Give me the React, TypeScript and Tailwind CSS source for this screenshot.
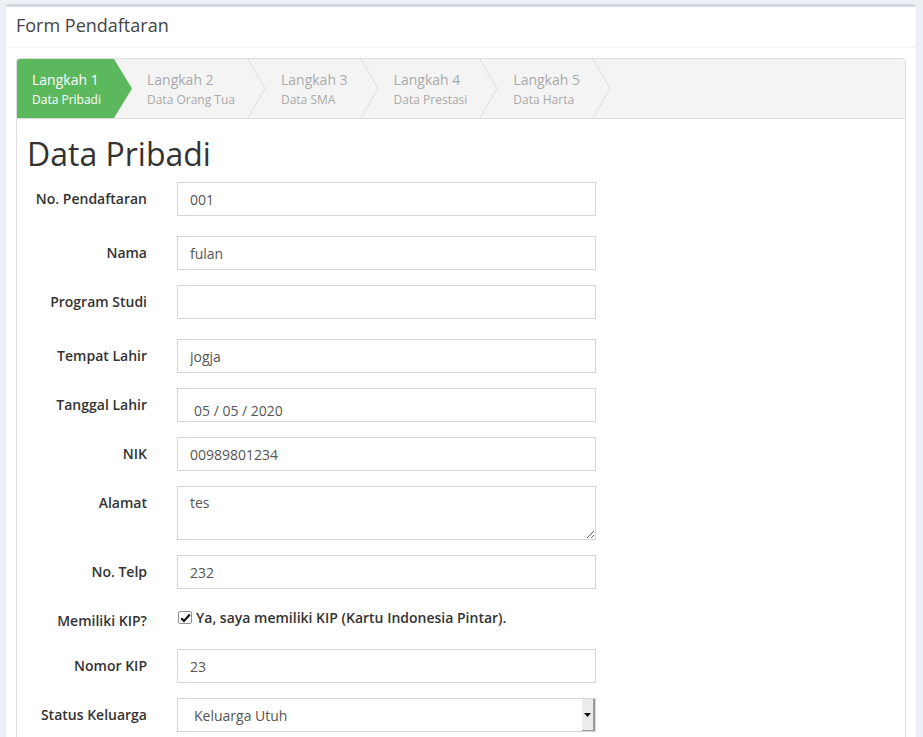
import { useState } from "react";

const steps = [
  { title: "Langkah 1", sub: "Data Pribadi" },
  { title: "Langkah 2", sub: "Data Orang Tua" },
  { title: "Langkah 3", sub: "Data SMA" },
  { title: "Langkah 4", sub: "Data Prestasi" },
  { title: "Langkah 5", sub: "Data Harta" },
];

function Row({ label, mb = "mb-[15px]", children }: { label: string; mb?: string; children: React.ReactNode }) {
  return (
    <div className={`flex items-start ${mb}`}>
      <label className="w-[130px] shrink-0 text-right pt-[7px] leading-5 text-[14px] font-semibold text-[#333]">
        {label}
      </label>
      <div className="ml-[30px] w-[419px]">{children}</div>
    </div>
  );
}

function TextInput({ value }: { value: string }) {
  return (
    <input
      type="text"
      defaultValue={value}
      className="w-full h-[34px] px-[12px] border border-[#d2d6de] bg-white text-[14px] text-[#555] outline-none"
    />
  );
}

export default function App() {
  const [kip, setKip] = useState(true);

  return (
    <div className="min-h-screen bg-[#ecf0f5] pt-[4px] font-['Open_Sans',sans-serif]">
      <div className="ml-[6px] w-[910px] bg-white border-t-[3px] border-[#d2d6de] rounded-[3px] shadow-[0_1px_1px_rgba(0,0,0,0.1)]">
        <div className="h-[41px] pt-[8px] px-[10px] border-b border-[#f4f4f4]">
          <h3 className="text-[18px] leading-5 text-[#444]">Form Pendaftaran</h3>
        </div>

        <div className="p-[10px]">
          <div className="border border-[#ddd] rounded-t-[4px] pb-[40px]">
            {/* wizard steps */}
            <div className="flex h-[60px] bg-[#f4f4f4] border-b border-[#ddd] rounded-t-[4px]">
              {steps.map((s, i) => {
                const active = i === 0;
                return (
                  <div key={s.title} className="flex h-full">
                    <div
                      className={`flex flex-col justify-center pt-[2px] pl-[15px] pr-[13px] ${
                        active ? "bg-[#5cb85c] text-white rounded-tl-[3px]" : "text-[#aaa]"
                      }`}
                    >
                      <span className="text-[14px] leading-5">{s.title}</span>
                      <span className="text-[12px] leading-5">{s.sub}</span>
                    </div>
                    <svg width="18" height="59" viewBox="0 0 18 59" className="shrink-0">
                      {active ? (
                        <polygon points="0,0 18,29.5 0,59" fill="#5cb85c" />
                      ) : (
                        <polyline points="0,0 17,29.5 0,59" fill="none" stroke="#dcdcdc" strokeWidth="1" />
                      )}
                    </svg>
                  </div>
                );
              })}
            </div>

            <h2 className="mt-[17px] mb-[11px] pl-[10px] text-[32px] leading-[35px] text-[#333]">Data Pribadi</h2>

            <Row label="No. Pendaftaran" mb="mb-[20px]">
              <TextInput value="001" />
            </Row>
            <Row label="Nama">
              <TextInput value="fulan" />
            </Row>
            <Row label="Program Studi" mb="mb-[20px]">
              <TextInput value="" />
            </Row>
            <Row label="Tempat Lahir">
              <TextInput value="jogja" />
            </Row>
            <Row label="Tanggal Lahir">
              <div className="h-[34px] pl-[16px] pt-[12px] border border-[#d2d6de] text-[14px] leading-5 text-[#555]">
                05 / 05 / 2020
              </div>
            </Row>
            <Row label="NIK">
              <TextInput value="00989801234" />
            </Row>
            <Row label="Alamat">
              <textarea
                defaultValue="tes"
                className="block w-full h-[54px] px-[12px] py-[6px] border border-[#d2d6de] text-[14px] leading-5 text-[#555] outline-none"
              />
            </Row>
            <Row label="No. Telp">
              <TextInput value="232" />
            </Row>
            <Row label="Memiliki KIP?">
              <div className="h-[30px] pt-[4px] flex items-start">
                <button
                  type="button"
                  onClick={() => setKip(!kip)}
                  className="mt-[3px] ml-[1px] w-[14px] h-[13px] rounded-[2px] border border-[#8f8f8f] bg-white flex items-center justify-center"
                >
                  {kip && (
                    <svg width="11" height="10" viewBox="0 0 11 10">
                      <path d="M1.2 5.2 L4 8 L9.8 1.6" fill="none" stroke="#111" strokeWidth="2.2" />
                    </svg>
                  )}
                </button>
                <span className="ml-[4px] text-[14px] leading-5 font-semibold text-[#333]">
                  Ya, saya memiliki KIP (Kartu Indonesia Pintar).
                </span>
              </div>
            </Row>
            <Row label="Nomor KIP">
              <TextInput value="23" />
            </Row>
            <Row label="Status Keluarga" mb="mb-[40px]">
              <div className="relative h-[34px] pl-[16px] pt-[7px] border border-[#d2d6de] text-[14px] leading-5 text-[#555]">
                Keluarga Utuh
                <div className="absolute right-0 top-0 bottom-0 w-[13px] bg-[#ececec] border-r-2 border-b border-[#9a9a9a] flex items-center justify-center">
                  <svg width="7" height="4" viewBox="0 0 7 4">
                    <polygon points="0,0 7,0 3.5,4" fill="#111" />
                  </svg>
                </div>
              </div>
            </Row>
          </div>
        </div>
      </div>
    </div>
  );
}
